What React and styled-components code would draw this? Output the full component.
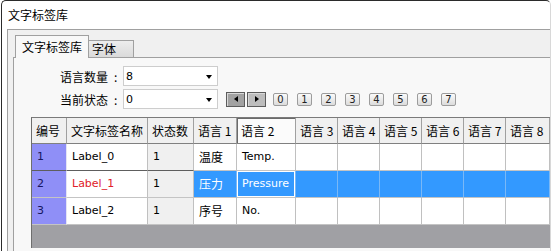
import styled, { createGlobalStyle } from "styled-components";

const GlobalStyle = createGlobalStyle`
  html, body {
    margin: 0;
    padding: 0;
    background: #fff;
    overflow: hidden;
  }
  body {
    width: 556px;
    height: 251px;
    font-family: "Noto Sans CJK SC", sans-serif;
    font-size: 12px;
    color: #000;
  }
`;

const columns = [35, 81, 46, 43, 59, 42, 42, 42, 42, 42, 44];

const headers = [
  "编号",
  "文字标签名称",
  "状态数",
  "语言 1",
  "语言 2",
  "语言 3",
  "语言 4",
  "语言 5",
  "语言 6",
  "语言 7",
  "语言 8",
];

const rows = [
  { id: "1", name: "Label_0", count: "1", l1: "温度", l2: "Temp." },
  { id: "2", name: "Label_1", count: "1", l1: "压力", l2: "Pressure", selected: true },
  { id: "3", name: "Label_2", count: "1", l1: "序号", l2: "No." },
];

const App = () => {
  return (
    <>
      <GlobalStyle />
      <Window>
        <Title>文字标签库</Title>
        <Frame>
          <TabStrip>
            <Tab $active $w={74}>文字标签库</Tab>
            <Tab $w={45}>字体</Tab>
          </TabStrip>
          <Panel>
            <FormRow>
              <Label>
                语言数量<Colon>:</Colon>
              </Label>
              <Combo>
                <span>8</span>
                <Arrow />
              </Combo>
            </FormRow>
            <FormRow $gap={3}>
              <Label>
                当前状态<Colon>:</Colon>
              </Label>
              <Combo>
                <span>0</span>
                <Arrow />
              </Combo>
              <NavButton $dark>
                <Tri $dir="left" />
              </NavButton>
              <NavButton>
                <Tri $dir="right" />
              </NavButton>
              <StateButtons>
                {[0, 1, 2, 3, 4, 5, 6, 7].map((n) => (
                  <StateButton key={n}>{n}</StateButton>
                ))}
              </StateButtons>
            </FormRow>

            {/* grid */}
            <GridWrap>
              <Grid>
                {headers.map((h, i) => (
                  <HeadCell key={h} $active={i === 4}>
                    {h}
                  </HeadCell>
                ))}
                {rows.map((r, ri) =>
                  [r.id, r.name, r.count, r.l1, r.l2, "", "", "", "", "", ""].map((v, ci) => (
                    <Cell
                      key={ri + "-" + ci}
                      $kind={ci === 0 ? "num" : ci === 2 ? "ro" : r.selected && ci >= 3 ? "sel" : "plain"}
                      $cjk={ci === 3}
                      $red={r.selected && ci === 1}
                      $focus={r.selected && ci === 4}
                      $cur={ri === 0 && ci < 3}
                    >
                      {v}
                    </Cell>
                  ))
                )}
              </Grid>
            </GridWrap>
          </Panel>
        </Frame>
      </Window>
    </>
  );
};

const Window = styled.div`
  box-sizing: border-box;
  margin-left: 1px;
  width: 550px;
  height: 262px;
  border: 1px solid #2b2b2b;
  border-right-color: #d8d8d8;
  border-bottom: none;
  border-radius: 5px 5px 0 0;
  background: #fff;
  display: flex;
  flex-direction: column;
`;

const Title = styled.div`
  height: 28px;
  line-height: 28px;
  padding-left: 6px;
  font-size: 12px;
`;

const Frame = styled.div`
  flex: 1;
  margin-left: 5px;
  border-top: 1px solid #a0a0a0;
  border-left: 1px solid #a0a0a0;
  background: #f0f0f0;
  padding-top: 5px;
  display: flex;
  flex-direction: column;
`;

const TabStrip = styled.div`
  display: flex;
  align-items: flex-end;
  height: 22px;
  margin-left: 7px;
  position: relative;
  z-index: 1;
`;

const Tab = styled.div`
  box-sizing: border-box;
  width: ${({ $w }) => $w}px;
  height: ${({ $active }) => ($active ? 23 : 17)}px;
  margin-bottom: ${({ $active }) => ($active ? -1 : 0)}px;
  line-height: ${({ $active }) => ($active ? 21 : 16)}px;
  padding-left: ${({ $active }) => ($active ? 6 : 3)}px;
  border: 1px solid #a0a0a0;
  border-bottom: none;
  border-left: ${({ $active }) => ($active ? "1px solid #a0a0a0" : "none")};
  background: ${({ $active }) =>
    $active ? "#f8f8f8" : "linear-gradient(#ededed, #dadada)"};
  font-size: 12px;
`;

const Panel = styled.div`
  flex: 1;
  margin-left: 5px;
  border-top: 1px solid #a0a0a0;
  border-left: 1px solid #a0a0a0;
  background: #f8f8f8;
  padding-top: 8px;
  overflow: hidden;
`;

const FormRow = styled.div`
  display: flex;
  align-items: center;
  height: 20px;
  padding-left: 46px;
  margin-top: ${({ $gap }) => $gap || 0}px;
`;

const Label = styled.div`
  width: 63px;
  display: flex;
  font-size: 12px;
`;

const Colon = styled.span`
  margin-left: 6px;
`;

const Combo = styled.div`
  box-sizing: border-box;
  width: 95px;
  height: 20px;
  border: 1px solid #cdcdcd;
  background: #fff;
  display: flex;
  align-items: center;
  justify-content: space-between;
  padding: 0 5px 0 2px;
  font-family: "DejaVu Sans", sans-serif;
  font-size: 11px;
`;

const Arrow = styled.span`
  width: 0;
  height: 0;
  margin-top: 2px;
  border-left: 3.5px solid transparent;
  border-right: 3.5px solid transparent;
  border-top: 4px solid #000;
`;

const NavButton = styled.div`
  box-sizing: border-box;
  width: 19px;
  height: 15px;
  margin-left: ${({ $dark }) => ($dark ? 8 : 2)}px;
  border: 1px solid #5c5c5c;
  box-shadow: inset 1px 1px 0 #d8d8d8;
  background: ${({ $dark }) => ($dark ? "#a2a2a2" : "#bdbdbd")};
  display: flex;
  align-items: center;
  justify-content: center;
`;

const Tri = styled.span`
  width: 0;
  height: 0;
  border-top: 3.5px solid transparent;
  border-bottom: 3.5px solid transparent;
  ${({ $dir }) =>
    $dir === "left" ? "border-right: 4px solid #000;" : "border-left: 4px solid #000;"}
`;

const StateButtons = styled.div`
  display: flex;
  gap: 9px;
  margin-left: 7px;
`;

const StateButton = styled.div`
  box-sizing: border-box;
  width: 15px;
  height: 13px;
  border: 1px solid #9c9c9c;
  border-radius: 2px;
  background: linear-gradient(#fafafa, #dcdcdc);
  font-family: "DejaVu Sans", sans-serif;
  font-size: 10px;
  line-height: 11px;
  text-align: center;
  color: #222;
`;

const GridWrap = styled.div`
  box-sizing: border-box;
  margin: 8px 0 0 17px;
  width: 519px;
  height: 131px;
  border-left: 1px solid #6e6e6e;
  border-top: 1px solid #7a7a7a;
  background: #a0a0a4;
`;

const Grid = styled.div`
  display: grid;
  grid-template-columns: ${columns.map((c) => c + "px").join(" ")};
`;

const HeadCell = styled.div`
  box-sizing: border-box;
  height: 26px;
  line-height: 25px;
  padding-left: 4px;
  background: ${({ $active }) => ($active ? "#fbfbfb" : "#f0f0f0")};
  border-right: 1px solid #a0a0a0;
  border-bottom: 1px solid #808080;
  box-shadow: ${({ $active }) => ($active ? "inset 1px 1px 0 #6a6a6a" : "none")};
  font-size: 12px;
  white-space: nowrap;
  overflow: hidden;
`;

const kindBg = {
  num: "#8f8ff7",
  ro: "#f0f0f0",
  sel: "#3399ff",
  plain: "#fff",
};

const Cell = styled.div`
  box-sizing: border-box;
  height: 27px;
  line-height: 26px;
  padding-left: 5px;
  background: ${({ $kind }) => kindBg[$kind]};
  color: ${({ $kind, $red }) =>
    $red ? "#e0202a" : $kind === "sel" ? "#fff" : $kind === "num" ? "#161660" : "#000"};
  border-right: 1px solid
    ${({ $kind }) => ($kind === "sel" ? "#7ab8f6" : $kind === "num" ? "#e4e4f4" : "#c0c0c0")};
  border-bottom: 1px solid ${({ $cur }) => ($cur ? "#5e5e5e" : "#c4c4c4")};
  box-shadow: ${({ $focus }) => ($focus ? "inset 0 0 0 1px #fff" : "none")};
  font-family: ${({ $cjk }) =>
    $cjk ? '"Noto Sans CJK SC", sans-serif' : '"DejaVu Sans", "Noto Sans CJK SC", sans-serif'};
  font-size: ${({ $cjk }) => ($cjk ? 12 : 11)}px;
  white-space: nowrap;
  overflow: hidden;
`;

export default App;
